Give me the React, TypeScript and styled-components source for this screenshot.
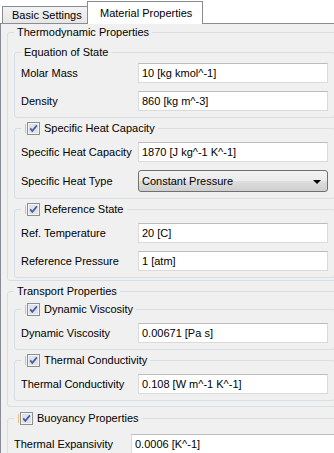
import React from 'react'
import styled, { createGlobalStyle } from 'styled-components'

const GlobalStyle = createGlobalStyle`
  html, body {
    margin: 0;
    padding: 0;
    background: #ffffff;
  }
  body {
    font-family: "Liberation Sans", Arial, sans-serif;
    font-size: 11px;
    color: #000000;
  }
`

interface FieldRow {
  label: string
  value: string
  select?: boolean
}

const App = () => (
  <>
    <GlobalStyle />
    <Viewport>
      <TabWidget>
        <TabBar>
          <Tab $width={86}>Basic Settings</Tab>
          <Tab $width={116} $active>
            Material Properties
          </Tab>
        </TabBar>
        <Panel>
          <Group title="Thermodynamic Properties" padTop={7} padBottom={2}>
            <Group
              title="Equation of State"
              padTop={4}
              rows={[
                { label: 'Molar Mass', value: '10 [kg kmol^-1]' },
                { label: 'Density', value: '860 [kg m^-3]' },
              ]}
            />
            <Group
              title="Specific Heat Capacity"
              checkable
              padTop={7}
              rows={[
                { label: 'Specific Heat Capacity', value: '1870 [J kg^-1 K^-1]' },
                { label: 'Specific Heat Type', value: 'Constant Pressure', select: true },
              ]}
            />
            <Group
              title="Reference State"
              checkable
              padTop={7}
              rows={[
                { label: 'Ref. Temperature', value: '20 [C]' },
                { label: 'Reference Pressure', value: '1 [atm]' },
              ]}
            />
          </Group>
          <Group title="Transport Properties" padTop={4} padBottom={5}>
            <Group
              title="Dynamic Viscosity"
              checkable
              padTop={7}
              rows={[{ label: 'Dynamic Viscosity', value: '0.00671 [Pa s]' }]}
            />
            <Group
              title="Thermal Conductivity"
              checkable
              padTop={7}
              rows={[{ label: 'Thermal Conductivity', value: '0.108 [W m^-1 K^-1]' }]}
            />
          </Group>
          <Group
            title="Buoyancy Properties"
            checkable
            padTop={9}
            rows={[{ label: 'Thermal Expansivity', value: '0.0006 [K^-1]' }]}
          />
        </Panel>
      </TabWidget>
    </Viewport>
  </>
)

interface GroupProps {
  title: string
  checkable?: boolean
  padTop: number
  padBottom?: number
  rows?: FieldRow[]
  children?: React.ReactNode
}

const Group = ({ title, checkable, padTop, padBottom = 6, rows, children }: GroupProps) => (
  <GroupBox $padTop={padTop} $padBottom={padBottom}>
    {checkable ? (
      <CheckLegend>
        <Tick />
        <CheckBox />
        <span>{title}</span>
      </CheckLegend>
    ) : (
      <TextLegend>{title}</TextLegend>
    )}
    {rows && (
      <Rows>
        {rows.map((row) => (
          <React.Fragment key={row.label}>
            <Label>{row.label}</Label>
            {row.select ? (
              <Combo>
                <span>{row.value}</span>
                <Arrow />
              </Combo>
            ) : (
              <Field readOnly defaultValue={row.value} />
            )}
          </React.Fragment>
        ))}
      </Rows>
    )}
    {children && <Stack>{children}</Stack>}
  </GroupBox>
)

const CheckBox = () => (
  <CheckIcon width="13" height="13" viewBox="0 0 13 13">
    <rect x="0.5" y="0.5" width="12" height="12" fill="#f4f4f4" stroke="#8e8f8f" />
    <rect x="2" y="2" width="9" height="9" fill="#dde2ec" />
    <path d="M3.2 6.4 L5.3 8.9 L9.9 3.4" fill="none" stroke="#4a5c9a" strokeWidth="1.7" />
  </CheckIcon>
)

export default App

const Viewport = styled.div`
  width: 334px;
  height: 453px;
  overflow: hidden;
`

const TabWidget = styled.div`
  width: 348px;
  display: flex;
  flex-direction: column;
`

const TabBar = styled.div`
  display: flex;
  align-items: flex-end;
  height: 23px;
  padding-left: 2px;
  position: relative;
  z-index: 1;
`

const Tab = styled.div<{ $active?: boolean; $width: number }>`
  box-sizing: border-box;
  width: ${({ $width }) => $width}px;
  height: ${({ $active }) => ($active ? 23 : 17)}px;
  margin-bottom: ${({ $active }) => ($active ? -1 : 0)}px;
  margin-left: ${({ $active }) => ($active ? -1 : 0)}px;
  padding-left: ${({ $active }) => ($active ? 12 : 9)}px;
  border: 1px solid #898c95;
  border-bottom: none;
  background: ${({ $active }) => ($active ? '#ffffff' : 'linear-gradient(#f3f3f3, #e6e6e6)')};
  display: flex;
  align-items: center;
  white-space: nowrap;
`

const Panel = styled.div`
  border: 1px solid #898c95;
  border-right: none;
  background: #f0f0f0;
  padding: 2px 6px 20px 6px;
  display: flex;
  flex-direction: column;
  gap: 4px;
`

const GroupBox = styled.fieldset<{ $padTop: number; $padBottom: number }>`
  margin: 0;
  min-width: 0;
  border: 1px solid #d5dfe5;
  border-radius: 3px;
  padding: ${({ $padTop }) => $padTop}px 6px ${({ $padBottom }) => $padBottom}px 6px;
`

const TextLegend = styled.legend`
  padding: 0 3px;
  line-height: 13px;
  height: 13px;
  white-space: nowrap;
`

const CheckLegend = styled.legend`
  padding: 0 3px 0 4px;
  height: 14px;
  display: flex;
  align-items: center;
  white-space: nowrap;
`

const Tick = styled.span`
  width: 1px;
  height: 9px;
  background: #f0c07a;
`

const CheckIcon = styled.svg`
  margin-left: 1px;
  margin-right: 4px;
  flex-shrink: 0;
`

const Stack = styled.div`
  display: flex;
  flex-direction: column;
  gap: 3px;
`

const Rows = styled.div`
  display: grid;
  grid-template-columns: 117px 1fr;
  row-gap: 8px;
  align-items: center;
`

const Label = styled.div`
  white-space: nowrap;
`

const Field = styled.input`
  box-sizing: border-box;
  height: 20px;
  width: 100%;
  margin: 0;
  padding: 0 3px;
  border: 1px solid #dadada;
  border-top-color: #bcbcbc;
  background: #ffffff;
  font: inherit;
  color: #000000;
  outline: none;
`

const Combo = styled.div`
  box-sizing: border-box;
  height: 22px;
  padding: 0 6px 0 3px;
  border: 1px solid #707070;
  border-radius: 3px;
  background: linear-gradient(#f2f2f2 0%, #ebebeb 48%, #dddddd 52%, #cfcfcf 100%);
  display: flex;
  align-items: center;
  justify-content: space-between;
  white-space: nowrap;
`

const Arrow = styled.span`
  width: 0;
  height: 0;
  margin-top: 2px;
  border-left: 4px solid transparent;
  border-right: 4px solid transparent;
  border-top: 4px solid #000000;
`
